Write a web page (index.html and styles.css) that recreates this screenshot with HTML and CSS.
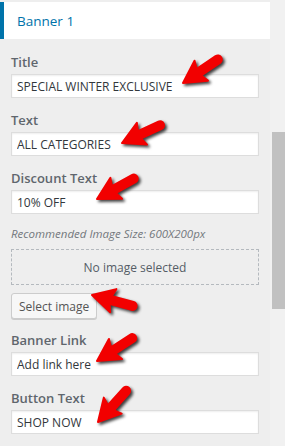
FILE: index.html
```html
<!DOCTYPE html>
<html lang="en">

<head>
    <meta charset="UTF-8">
    <meta name="viewport" content="width=device-width, initial-scale=1.0">
    <title>Banner Settings</title>
    <link rel="stylesheet" href="styles.css">
</head>

<body>
    <div class="layout">
        <div class="panel">
            <div class="section-head">Banner 1</div>

            <div class="controls">
                <div class="control">
                    <label class="control-title">Title</label>
                    <input class="text-input" type="text" value="SPECIAL WINTER EXCLUSIVE">
                </div>

                <div class="control">
                    <label class="control-title">Text</label>
                    <input class="text-input" type="text" value="ALL CATEGORIES">
                </div>

                <div class="control">
                    <label class="control-title">Discount Text</label>
                    <input class="text-input" type="text" value="10% OFF">
                </div>

                <div class="control">
                    <div class="description">Recommended Image Size: 600X200px</div>
                    <div class="placeholder">No image selected</div>
                    <button class="button">Select image</button>
                </div>

                <div class="control">
                    <label class="control-title">Banner Link</label>
                    <input class="text-input" type="text" value="Add link here">
                </div>

                <div class="control">
                    <label class="control-title">Button Text</label>
                    <input class="text-input" type="text" value="SHOP NOW">
                </div>
            </div>
        </div>

        <div class="scroll-track">
            <div class="scroll-thumb"></div>
        </div>
    </div>

    <!-- annotation arrows drawn over the form -->
    <svg class="arrows" viewBox="0 0 285 446" width="285" height="446">
        <defs>
            <g id="arrow">
                <line x1="14" y1="0" x2="42" y2="0" stroke="#f20000" stroke-width="10" stroke-linecap="round" />
                <path d="M0,0 L22,-12 L18,0 L22,12 Z" fill="#f20000" stroke="#f20000" stroke-width="2" stroke-linejoin="round" />
            </g>
        </defs>
        <use href="#arrow" transform="translate(183,83) rotate(-34)" />
        <use href="#arrow" transform="translate(122,143) rotate(-25)" />
        <use href="#arrow" transform="translate(97,199) rotate(-29)" />
        <use href="#arrow" transform="translate(92,295) rotate(15)" />
        <use href="#arrow" transform="translate(97,361) rotate(-33)" />
        <use href="#arrow" transform="translate(98,422) rotate(-48)" />
    </svg>
</body>

</html>
```

FILE: styles.css
```css
* {
    margin: 0;
    padding: 0;
    box-sizing: border-box;
    font-family: "Open Sans", "Noto Sans", sans-serif;
}

body {
    background-color: #eeeeee;
    width: 285px;
    height: 446px;
    overflow: hidden;
    position: relative;
}

.layout {
    display: flex;
    height: 100%;
}

.panel {
    width: 270px;
    padding-top: 2px;
}

.section-head {
    height: 37px;
    background: #ffffff;
    border-left: 4px solid #0073aa;
    padding-left: 13px;
    display: flex;
    align-items: center;
    font-size: 13.5px;
    color: #0073aa;
}

.controls {
    padding: 11px 11px 0;
    display: flex;
    flex-direction: column;
}

.control {
    display: flex;
    flex-direction: column;
    align-items: flex-start;
    margin-bottom: 10px;
}

.control-title {
    font-size: 13px;
    font-weight: 600;
    line-height: 24px;
    color: #5f666d;
}

.text-input {
    width: 248px;
    height: 24px;
    padding: 0 5px;
    background: #ffffff;
    border: 1px solid #dddddd;
    box-shadow: inset 0 1px 2px rgba(0, 0, 0, 0.07);
    font-size: 12px;
    color: #32373c;
    outline: none;
}

.description {
    font-size: 11.5px;
    font-style: italic;
    line-height: 20px;
    color: #72777c;
}

.placeholder {
    width: 248px;
    height: 36px;
    margin-top: 5px;
    border: 1px dashed #b4b9be;
    display: flex;
    align-items: center;
    justify-content: center;
    font-size: 12px;
    color: #555d66;
}

.button {
    margin-top: 8px;
    margin-bottom: -1px;
    height: 26px;
    padding: 0 7px;
    background: #f7f7f7;
    border: 1px solid #cccccc;
    border-radius: 3px;
    box-shadow: 0 1px 0 #cccccc;
    font-size: 12px;
    color: #555555;
}

.scroll-track {
    width: 15px;
    background: #f1f1f1;
    padding-top: 132px;
    padding-left: 2px;
}

.scroll-thumb {
    width: 13px;
    height: 177px;
    background: #c1c1c1;
}

.arrows {
    position: absolute;
    top: 0;
    left: 0;
    pointer-events: none;
    filter: drop-shadow(2px 2px 1.5px rgba(0, 0, 0, 0.75));
}
```
